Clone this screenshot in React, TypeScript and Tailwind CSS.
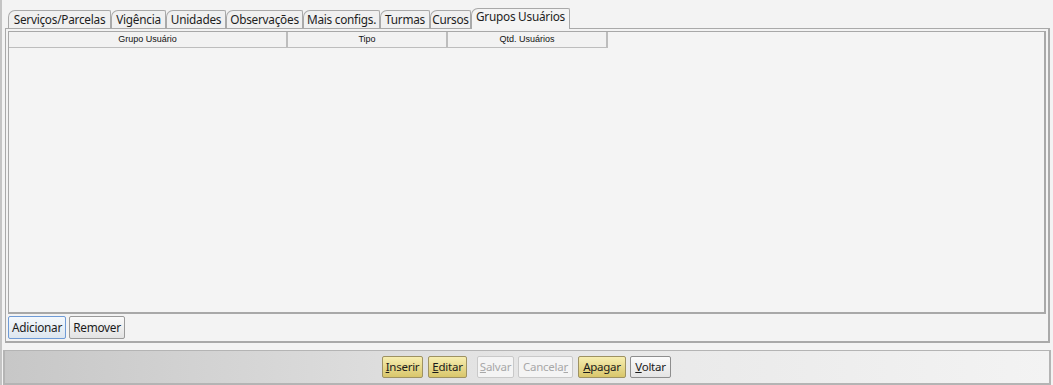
import React from 'react';

const tabs = [
  { label: 'Serviços/Parcelas', w: 'w-[103px]' },
  { label: 'Vigência', w: 'w-[55px]' },
  { label: 'Unidades', w: 'w-[60px]' },
  { label: 'Observações', w: 'w-[77px]' },
  { label: 'Mais configs.', w: 'w-[77px]' },
  { label: 'Turmas', w: 'w-[50px]' },
  { label: 'Cursos', w: 'w-[41px]' },
];

const columns = [
  { label: 'Grupo Usuário', w: 'w-[279px]' },
  { label: 'Tipo', w: 'w-[160px]' },
  { label: 'Qtd. Usuários', w: 'w-[160px]' },
];

const ui = { fontFamily: '"Noto Sans", "Open Sans", sans-serif' };
const small = { fontFamily: '"Liberation Sans", Arial, sans-serif' };

function BarButton({ first, rest, kind, w, underlineLast }: { first: string; rest: string; kind: 'yellow' | 'white' | 'disabled'; w: string; underlineLast?: boolean }) {
  const cls =
    kind === 'yellow'
      ? 'bg-gradient-to-b from-[#f7eeb0] to-[#d9c66a] border-[#9e9262] text-[#1a1a1a]'
      : kind === 'white'
      ? 'bg-gradient-to-b from-[#fbfbfb] to-[#e4e4e4] border-[#8e8e8e] text-[#1a1a1a]'
      : 'bg-[#f4f4f4] border-[#c9c9c9] text-[#a8a8a8]';
  return (
    <button className={`${w} h-[22px] border rounded-[2px] text-[11.5px] tracking-[-0.25px] leading-none flex items-center justify-center ${cls}`} style={ui}>
      {underlineLast ? (
        <span>
          {first}
          <span className='underline'>{rest}</span>
        </span>
      ) : (
        <span>
          <span className='underline'>{first}</span>
          {rest}
        </span>
      )}
    </button>
  );
}

export default function App() {
  return (
    <div className='w-[1053px] h-[385px] bg-[#f3f3f3] overflow-hidden flex flex-col border-l-2 border-[#c4c4c4]' style={ui}>
      {/* tab strip */}
      <div className='h-[28px] flex items-end pl-[6px] pr-[3px]'>
        {tabs.map((t) => (
          <div
            key={t.label}
            className={`${t.w} h-[18px] flex items-center justify-center border border-b-0 border-[#a9a9a9] rounded-tl-[7px] rounded-tr-[2px] bg-[#f0f0f0] text-[11.8px] tracking-[-0.25px] text-[#1e1e1e] leading-none`}
          >
            {t.label}
          </div>
        ))}
        <div className='w-[99px] h-[21px] -mb-[1px] flex items-start justify-center pt-[2px] border border-b-0 border-[#a9a9a9] rounded-tl-[7px] rounded-tr-[2px] bg-[#f4f4f4] text-[11.8px] tracking-[-0.25px] text-[#1e1e1e] leading-none relative z-10'>
          Grupos Usuários
        </div>
      </div>

      {/* tab panel */}
      <div className='mx-[3px] mr-[3px] h-[315px] border border-[#a9a9a9] border-r-2 border-b-2 flex flex-col p-[2px] pt-[2px]'>
        <div className='flex-1 border border-[#a8a8a8] border-r-2 border-b-2 bg-[#f4f4f4] flex flex-col'>
          <div className='flex h-[16px]'>
            {columns.map((c) => (
              <div
                key={c.label}
                className={`${c.w} h-[16px] flex items-center justify-center bg-[#f2f2f2] border border-t-0 border-l-0 border-[#bdbdbd] border-r-2 text-[9px] text-[#111]`}
                style={small}
              >
                {c.label}
              </div>
            ))}
          </div>
        </div>
        <div className='flex gap-[3px] pt-[2px]'>
          <button
            className='w-[58px] h-[23px] border border-[#6f9bd6] rounded-[2px] bg-gradient-to-b from-[#f4f8fc] to-[#dde6ef] text-[11.8px] tracking-[-0.25px] text-[#1a1a1a] leading-none'
            style={ui}
          >
            Adicionar
          </button>
          <button
            className='w-[56px] h-[23px] border border-[#9a9a9a] rounded-[2px] bg-gradient-to-b from-[#fafafa] to-[#e3e3e3] text-[11.8px] tracking-[-0.25px] text-[#1a1a1a] leading-none'
            style={ui}
          >
            Remover
          </button>
        </div>
      </div>

      {/* bottom toolbar */}
      <div className='mt-[7px] mx-[1px] mr-[2px] h-[35px] border-2 border-[#b4b4b4] border-t-[1px] bg-gradient-to-r from-[#c7c7c7] via-[#e6e6e6] to-[#f3f3f3] flex items-center pl-[377px]'>
        <div className='flex items-center'>
          <BarButton first='I' rest='nserir' kind='yellow' w='w-[41px]' />
          <span className='w-[5px]' />
          <BarButton first='E' rest='ditar' kind='yellow' w='w-[39px]' />
          <span className='w-[10px]' />
          <BarButton first='S' rest='alvar' kind='disabled' w='w-[37px]' />
          <span className='w-[4px]' />
          <BarButton first='Cancela' rest='r' kind='disabled' w='w-[55px]' underlineLast />
          <span className='w-[5px]' />
          <BarButton first='A' rest='pagar' kind='yellow' w='w-[48px]' />
          <span className='w-[4px]' />
          <BarButton first='V' rest='oltar' kind='white' w='w-[41px]' />
        </div>
      </div>
    </div>
  );
}
